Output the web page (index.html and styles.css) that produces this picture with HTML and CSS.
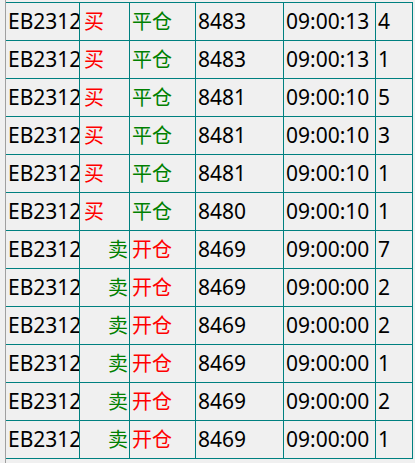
FILE: index.html
```html
<!DOCTYPE html>
<html lang="zh-CN">
<head>
    <meta charset="UTF-8">
    <title>成交明细</title>
    <link rel="stylesheet" href="styles.css">
</head>
<body>
    <div class="panel">
        <div class="grid">
            <div class="cell">EB2312</div><div class="cell buy">买</div><div class="cell green">平仓</div><div class="cell">8483</div><div class="cell">09:00:13</div><div class="cell">4</div>
            <div class="cell">EB2312</div><div class="cell buy">买</div><div class="cell green">平仓</div><div class="cell">8483</div><div class="cell">09:00:13</div><div class="cell">1</div>
            <div class="cell">EB2312</div><div class="cell buy">买</div><div class="cell green">平仓</div><div class="cell">8481</div><div class="cell">09:00:10</div><div class="cell">5</div>
            <div class="cell">EB2312</div><div class="cell buy">买</div><div class="cell green">平仓</div><div class="cell">8481</div><div class="cell">09:00:10</div><div class="cell">3</div>
            <div class="cell">EB2312</div><div class="cell buy">买</div><div class="cell green">平仓</div><div class="cell">8481</div><div class="cell">09:00:10</div><div class="cell">1</div>
            <div class="cell">EB2312</div><div class="cell buy">买</div><div class="cell green">平仓</div><div class="cell">8480</div><div class="cell">09:00:10</div><div class="cell">1</div>
            <div class="cell">EB2312</div><div class="cell sell">卖</div><div class="cell red">开仓</div><div class="cell">8469</div><div class="cell">09:00:00</div><div class="cell">7</div>
            <div class="cell">EB2312</div><div class="cell sell">卖</div><div class="cell red">开仓</div><div class="cell">8469</div><div class="cell">09:00:00</div><div class="cell">2</div>
            <div class="cell">EB2312</div><div class="cell sell">卖</div><div class="cell red">开仓</div><div class="cell">8469</div><div class="cell">09:00:00</div><div class="cell">2</div>
            <div class="cell">EB2312</div><div class="cell sell">卖</div><div class="cell red">开仓</div><div class="cell">8469</div><div class="cell">09:00:00</div><div class="cell">1</div>
            <div class="cell">EB2312</div><div class="cell sell">卖</div><div class="cell red">开仓</div><div class="cell">8469</div><div class="cell">09:00:00</div><div class="cell">2</div>
            <div class="cell">EB2312</div><div class="cell sell">卖</div><div class="cell red">开仓</div><div class="cell">8469</div><div class="cell">09:00:00</div><div class="cell">1</div>
        </div>
    </div>
</body>
</html>
```

FILE: styles.css
```css
:root {
    --bg: #f0f0f0;
    --line: #008080;
    --edge: #a0a0a0;
    --red: #ff0000;
    --green: #008000;
}

* {
    box-sizing: border-box;
    margin: 0;
    padding: 0;
}

body {
    font-family: 'Noto Sans', 'Noto Sans CJK SC', sans-serif;
    background: var(--bg);
    color: #000;
    overflow: hidden;
}

.panel {
    margin-left: 5px;
    border-left: 1px solid var(--edge);
    height: 100vh;
    padding-top: 2px;
}

.grid {
    display: grid;
    grid-template-columns: 73px 49px 65px 87px 91px 36px;
    grid-auto-rows: 37px;
    gap: 1px;
    padding: 1px 1px 1px 0;
    background: var(--line);
    width: max-content;
}

.cell {
    background: var(--bg);
    font-size: 21px;
    line-height: 37px;
    padding: 0 2px;
    white-space: nowrap;
    overflow: hidden;
}

.buy {
    color: var(--red);
    font-size: 20px;
    padding-left: 4px;
}

.sell {
    color: var(--green);
    font-size: 20px;
    text-align: right;
    padding-right: 1px;
}

.red,
.green {
    font-size: 20px;
}

.red {
    color: var(--red);
}

.green {
    color: var(--green);
}
```
